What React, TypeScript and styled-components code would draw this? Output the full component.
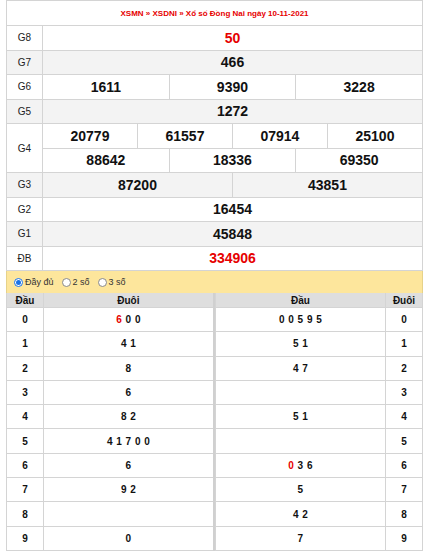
import React from "react";
import styled, { createGlobalStyle } from "styled-components";

const Global = createGlobalStyle`
  html, body { margin: 0; padding: 0; background: #fff; }
  body { font-family: "Liberation Sans", Arial, sans-serif; color: #111; }
`;

const Wrapper = styled.div`
  width: 417px;
  margin-left: 6px;
`;

const PrizeTable = styled.table`
  width: 100%;
  border-collapse: collapse;
  table-layout: fixed;
  border: 1px solid #d4d4d4;
`;

const TitleCell = styled.td`
  height: 24px;
  padding: 0;
  text-align: center;
  vertical-align: middle;
  color: #e60000;
  font-size: 8px;
  font-weight: bold;
  border: 1px solid #d4d4d4;
`;

const Row = styled.tr<{ $alt?: boolean }>`
  background: ${(p) => (p.$alt ? "#f3f3f3" : "#fff")};
`;

const LabelCell = styled.td`
  width: 35px;
  height: 23.5px;
  padding: 0;
  text-align: center;
  vertical-align: middle;
  font-size: 10px;
  color: #222;
  border: 1px solid #d4d4d4;
`;

const NumCell = styled.td<{ $red?: boolean }>`
  height: 23.5px;
  padding: 0;
  text-align: center;
  vertical-align: middle;
  font-size: 14px;
  font-weight: bold;
  color: ${(p) => (p.$red ? "#e60000" : "#111")};
  border: 1px solid #d4d4d4;
`;

const OptionBar = styled.div`
  display: flex;
  align-items: center;
  gap: 8px;
  height: 22px;
  padding-left: 7px;
  background: #fde69c;
  border-left: 1px solid #e6d28a;
  border-right: 1px solid #e6d28a;
`;

const Option = styled.label`
  display: flex;
  align-items: center;
  gap: 2px;
  font-size: 9px;
  color: #333;
`;

const Radio = styled.span<{ $on?: boolean }>`
  box-sizing: border-box;
  width: 9px;
  height: 9px;
  border-radius: 50%;
  border: 1px solid ${(p) => (p.$on ? "#1a73e8" : "#8a8a8a")};
  background: #fff;
  display: flex;
  align-items: center;
  justify-content: center;
  &::after {
    content: "";
    width: 5px;
    height: 5px;
    border-radius: 50%;
    background: ${(p) => (p.$on ? "#1a73e8" : "transparent")};
  }
`;

const Halves = styled.div`
  display: flex;
`;

const HalfTable = styled.table<{ $left?: boolean }>`
  flex: 1;
  border-collapse: collapse;
  table-layout: fixed;
  ${(p) => (p.$left ? "border-right: 2px solid #d0d0d0;" : "")}
`;

const HeadCell = styled.th<{ $w?: number }>`
  ${(p) => (p.$w ? `width: ${p.$w}px;` : "")}
  height: 14px;
  padding: 0;
  background: #dedede;
  font-size: 10px;
  font-weight: bold;
  text-align: center;
  color: #111;
  border: 1px solid #d4d4d4;
  border-top: none;
`;

const DigitCell = styled.td`
  height: 23.3px;
  padding: 0;
  text-align: center;
  vertical-align: middle;
  font-size: 10px;
  font-weight: bold;
  color: #111;
  border: 1px solid #d4d4d4;
  word-spacing: 1px;
`;

const Red = styled.span`
  color: #e60000;
`;

type Seg = { t: string; red?: boolean };

const prizes: { label: string; nums: string[]; red?: boolean }[] = [
  { label: "G8", nums: ["50"], red: true },
  { label: "G7", nums: ["466"] },
  { label: "G6", nums: ["1611", "9390", "3228"] },
  { label: "G5", nums: ["1272"] },
];

const prizesAfter: { label: string; nums: string[]; red?: boolean }[] = [
  { label: "G3", nums: ["87200", "43851"] },
  { label: "G2", nums: ["16454"] },
  { label: "G1", nums: ["45848"] },
  { label: "ĐB", nums: ["334906"], red: true },
];

const dau: Seg[][] = [
  [{ t: "6", red: true }, { t: " 0 0" }],
  [{ t: "4 1" }],
  [{ t: "8" }],
  [{ t: "6" }],
  [{ t: "8 2" }],
  [{ t: "4 1 7 0 0" }],
  [{ t: "6" }],
  [{ t: "9 2" }],
  [],
  [{ t: "0" }],
];

const duoi: Seg[][] = [
  [{ t: "0 0 5 9 5" }],
  [{ t: "5 1" }],
  [{ t: "4 7" }],
  [],
  [{ t: "5 1" }],
  [],
  [{ t: "0", red: true }, { t: " 3 6" }],
  [{ t: "5" }],
  [{ t: "4 2" }],
  [{ t: "7" }],
];

const renderSegs = (segs: Seg[]) =>
  segs.map((s, i) => (s.red ? <Red key={i}>{s.t}</Red> : <React.Fragment key={i}>{s.t}</React.Fragment>));

const PrizeRow = ({ label, nums, red, alt }: { label: string; nums: string[]; red?: boolean; alt: boolean }) => (
  <Row $alt={alt}>
    <LabelCell>{label}</LabelCell>
    {nums.map((n, i) => (
      <NumCell key={i} colSpan={12 / nums.length} $red={red}>
        {n}
      </NumCell>
    ))}
  </Row>
);

export default function App() {
  return (
    <Wrapper>
      <Global />
      <PrizeTable>
        <colgroup>
          <col style={{ width: 36 }} />
          {Array.from({ length: 12 }).map((_, i) => (
            <col key={i} />
          ))}
        </colgroup>
        <tbody>
          <tr>
            <TitleCell colSpan={13}>XSMN » XSDNI » Xổ số Đồng Nai ngày 10-11-2021</TitleCell>
          </tr>
          {prizes.map((p, i) => (
            <PrizeRow key={p.label} {...p} alt={i % 2 === 1} />
          ))}
          <Row>
            <LabelCell rowSpan={2}>G4</LabelCell>
            {["20779", "61557", "07914", "25100"].map((n) => (
              <NumCell key={n} colSpan={3}>
                {n}
              </NumCell>
            ))}
          </Row>
          <Row>
            {["88642", "18336", "69350"].map((n) => (
              <NumCell key={n} colSpan={4}>
                {n}
              </NumCell>
            ))}
          </Row>
          {prizesAfter.map((p, i) => (
            <PrizeRow key={p.label} {...p} alt={i % 2 === 0} />
          ))}
        </tbody>
      </PrizeTable>
      <OptionBar>
        <Option>
          <Radio $on />
          Đầy đủ
        </Option>
        <Option>
          <Radio />
          2 số
        </Option>
        <Option>
          <Radio />
          3 số
        </Option>
      </OptionBar>
      <Halves>
        <HalfTable $left>
          <thead>
            <tr>
              <HeadCell $w={36}>Đầu</HeadCell>
              <HeadCell>Đuôi</HeadCell>
            </tr>
          </thead>
          <tbody>
            {dau.map((segs, i) => (
              <tr key={i}>
                <DigitCell>{i}</DigitCell>
                <DigitCell>{renderSegs(segs)}</DigitCell>
              </tr>
            ))}
          </tbody>
        </HalfTable>
        <HalfTable>
          <thead>
            <tr>
              <HeadCell>Đầu</HeadCell>
              <HeadCell $w={36}>Đuôi</HeadCell>
            </tr>
          </thead>
          <tbody>
            {duoi.map((segs, i) => (
              <tr key={i}>
                <DigitCell>{renderSegs(segs)}</DigitCell>
                <DigitCell>{i}</DigitCell>
              </tr>
            ))}
          </tbody>
        </HalfTable>
      </Halves>
    </Wrapper>
  );
}
